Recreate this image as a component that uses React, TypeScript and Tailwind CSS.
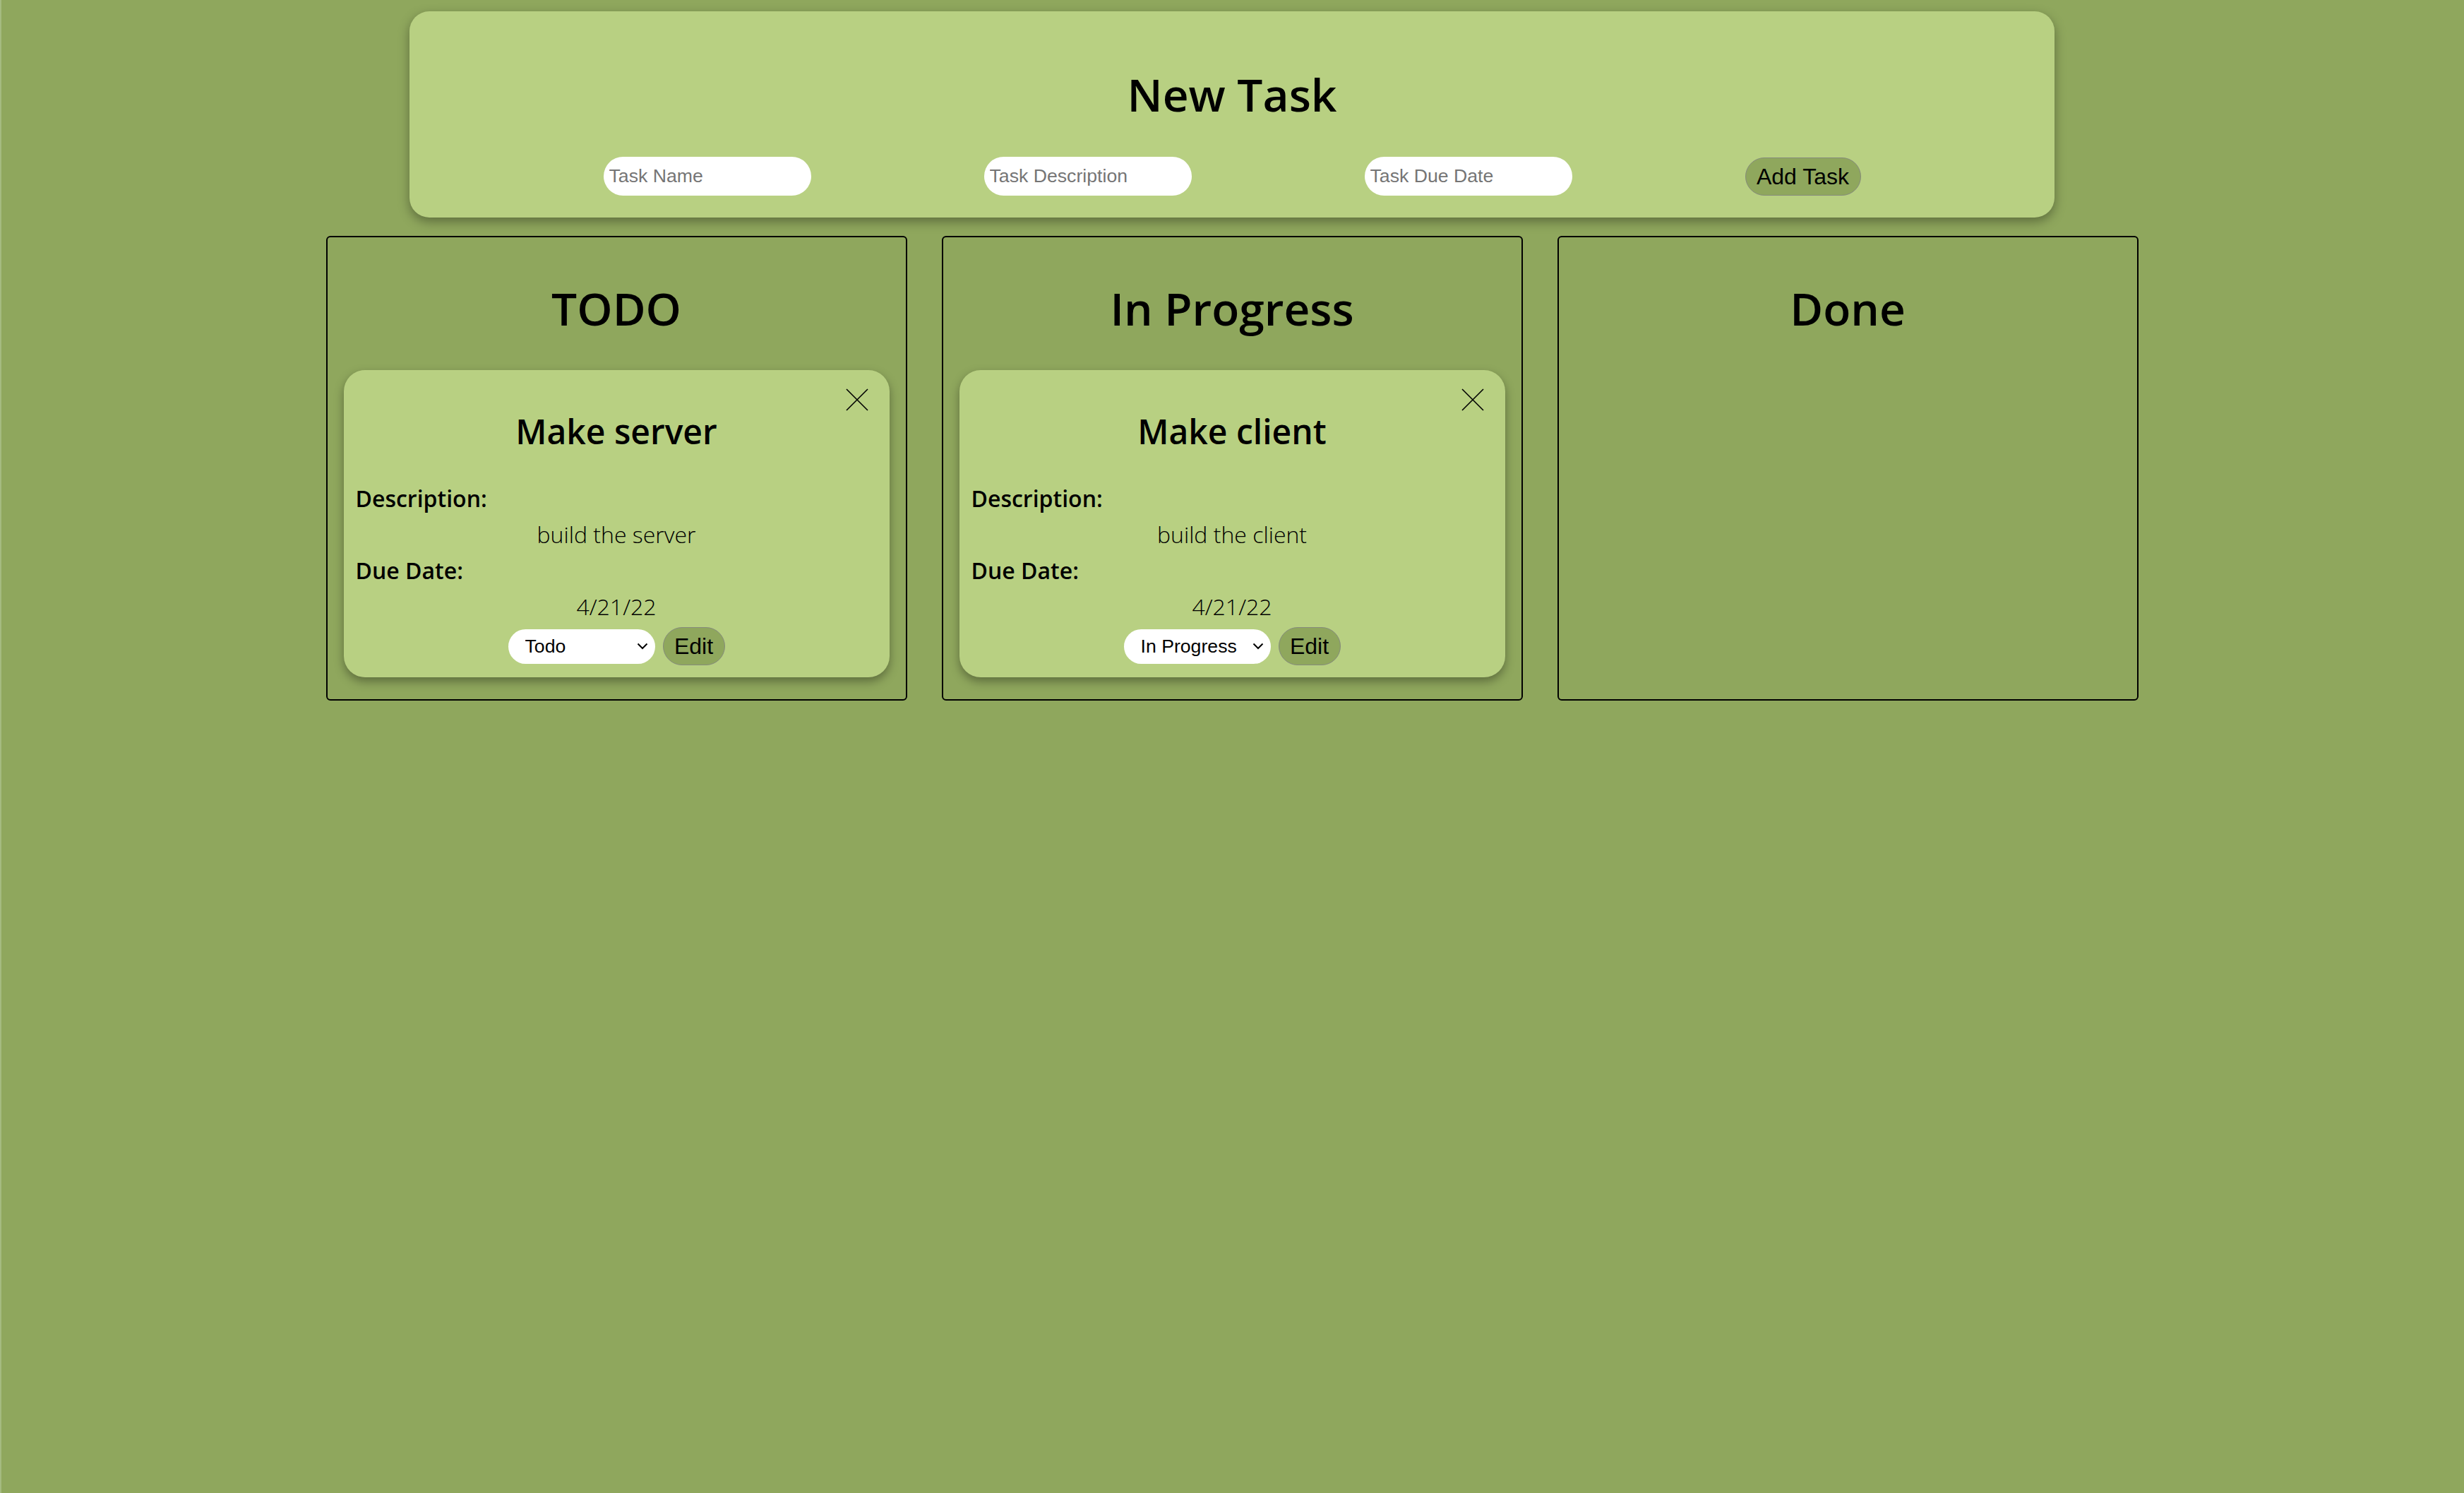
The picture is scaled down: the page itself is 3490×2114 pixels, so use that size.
import React from 'react';

type Task = {
    name: string;
    description: string;
    dueDate: string;
    status: string;
};

const columns: { title: string; tasks: Task[] }[] = [
    { title: 'TODO', tasks: [{ name: 'Make server', description: 'build the server', dueDate: '4/21/22', status: 'Todo' }] },
    { title: 'In Progress', tasks: [{ name: 'Make client', description: 'build the client', dueDate: '4/21/22', status: 'In Progress' }] },
    { title: 'Done', tasks: [] },
];

const TaskCard: React.FC<{ task: Task }> = ({ task }) => {
    return (
        <div className="mt-[55px] rounded-[30px] bg-[#b8d082] px-[17px] pt-[26px] pb-[17px] shadow-[0_6px_14px_rgba(0,0,0,0.35)]">
            <div className="flex justify-end pr-[13px]">
                <button className="h-[32px] w-[32px]">
                    <svg viewBox="0 0 32 32" className="h-[32px] w-[32px]" fill="none" stroke="black" strokeWidth="1.6">
                        <path d="M1 1 L31 31 M31 1 L1 31" />
                    </svg>
                </button>
            </div>
            <h2 className="mt-[5px] text-center text-[48px] leading-[48px] font-semibold">{task.name}</h2>
            <div className="mt-[45px] text-[32px] leading-[51px]">
                <p className="font-semibold">Description:</p>
                <p className="text-center font-light">{task.description}</p>
                <p className="font-semibold">Due Date:</p>
                <p className="text-center font-light">{task.dueDate}</p>
            </div>
            <div className="mt-[4px] flex items-center justify-center gap-[11px] font-['Liberation_Sans',Arial,sans-serif]">
                <label className="flex h-[49px] w-[208px] items-center rounded-full bg-white pl-[24px] pr-[10px]">
                    <select
                        defaultValue={task.status}
                        className="min-w-0 flex-1 appearance-none bg-transparent text-[26.67px] text-black outline-none"
                    >
                        <option>Todo</option>
                        <option>In Progress</option>
                        <option>Done</option>
                    </select>
                    <svg viewBox="0 0 16 10" className="h-[10px] w-[16px]" fill="none" stroke="black" strokeWidth="2">
                        <path d="M1.5 1.5 L8 8 L14.5 1.5" />
                    </svg>
                </label>
                <button className="h-[54px] w-[88px] rounded-full border border-[#858b7c] bg-[#8fa75d] text-[32px] text-black">
                    Edit
                </button>
            </div>
        </div>
    );
};

const App: React.FC = () => {
    return (
        <div className="min-h-screen bg-[#8fa75d] pt-[16px] font-['Open_Sans',sans-serif] text-black shadow-[inset_2px_0_0_#a5bb80]">
            <div className="mx-auto w-[2330px] rounded-[28px] bg-[#b8d082] pt-[86px] pb-[31px] shadow-[0_6px_16px_rgba(0,0,0,0.35)]">
                <h1 className="text-center text-[64px] leading-[64px] font-semibold">New Task</h1>
                <div className="mt-[56px] flex items-center justify-center gap-[245px] font-['Liberation_Sans',Arial,sans-serif]">
                    <input
                        placeholder="Task Name"
                        className="h-[55px] w-[294px] rounded-full bg-white px-[8px] text-[26.67px] outline-none placeholder:text-[#757575]"
                    />
                    <input
                        placeholder="Task Description"
                        className="h-[55px] w-[294px] rounded-full bg-white px-[8px] text-[26.67px] outline-none placeholder:text-[#757575]"
                    />
                    <input
                        placeholder="Task Due Date"
                        className="h-[55px] w-[294px] rounded-full bg-white px-[8px] text-[26.67px] outline-none placeholder:text-[#757575]"
                    />
                    <button className="h-[54px] w-[164px] rounded-full border border-[#858b7c] bg-[#8fa75d] text-[32px] text-black">
                        Add Task
                    </button>
                </div>
            </div>

            <div className="mt-[26px] flex justify-center gap-[49px]">
                {columns.map((col) => (
                    <div key={col.title} className="w-[823px] rounded-[6px] border-2 border-black px-[23px] pt-[69px] pb-[31px]">
                        <h1 className="text-center text-[64px] leading-[64px] font-semibold">{col.title}</h1>
                        {col.tasks.map((t) => (
                            <TaskCard key={t.name} task={t} />
                        ))}
                    </div>
                ))}
            </div>
        </div>
    );
};

export default App;
